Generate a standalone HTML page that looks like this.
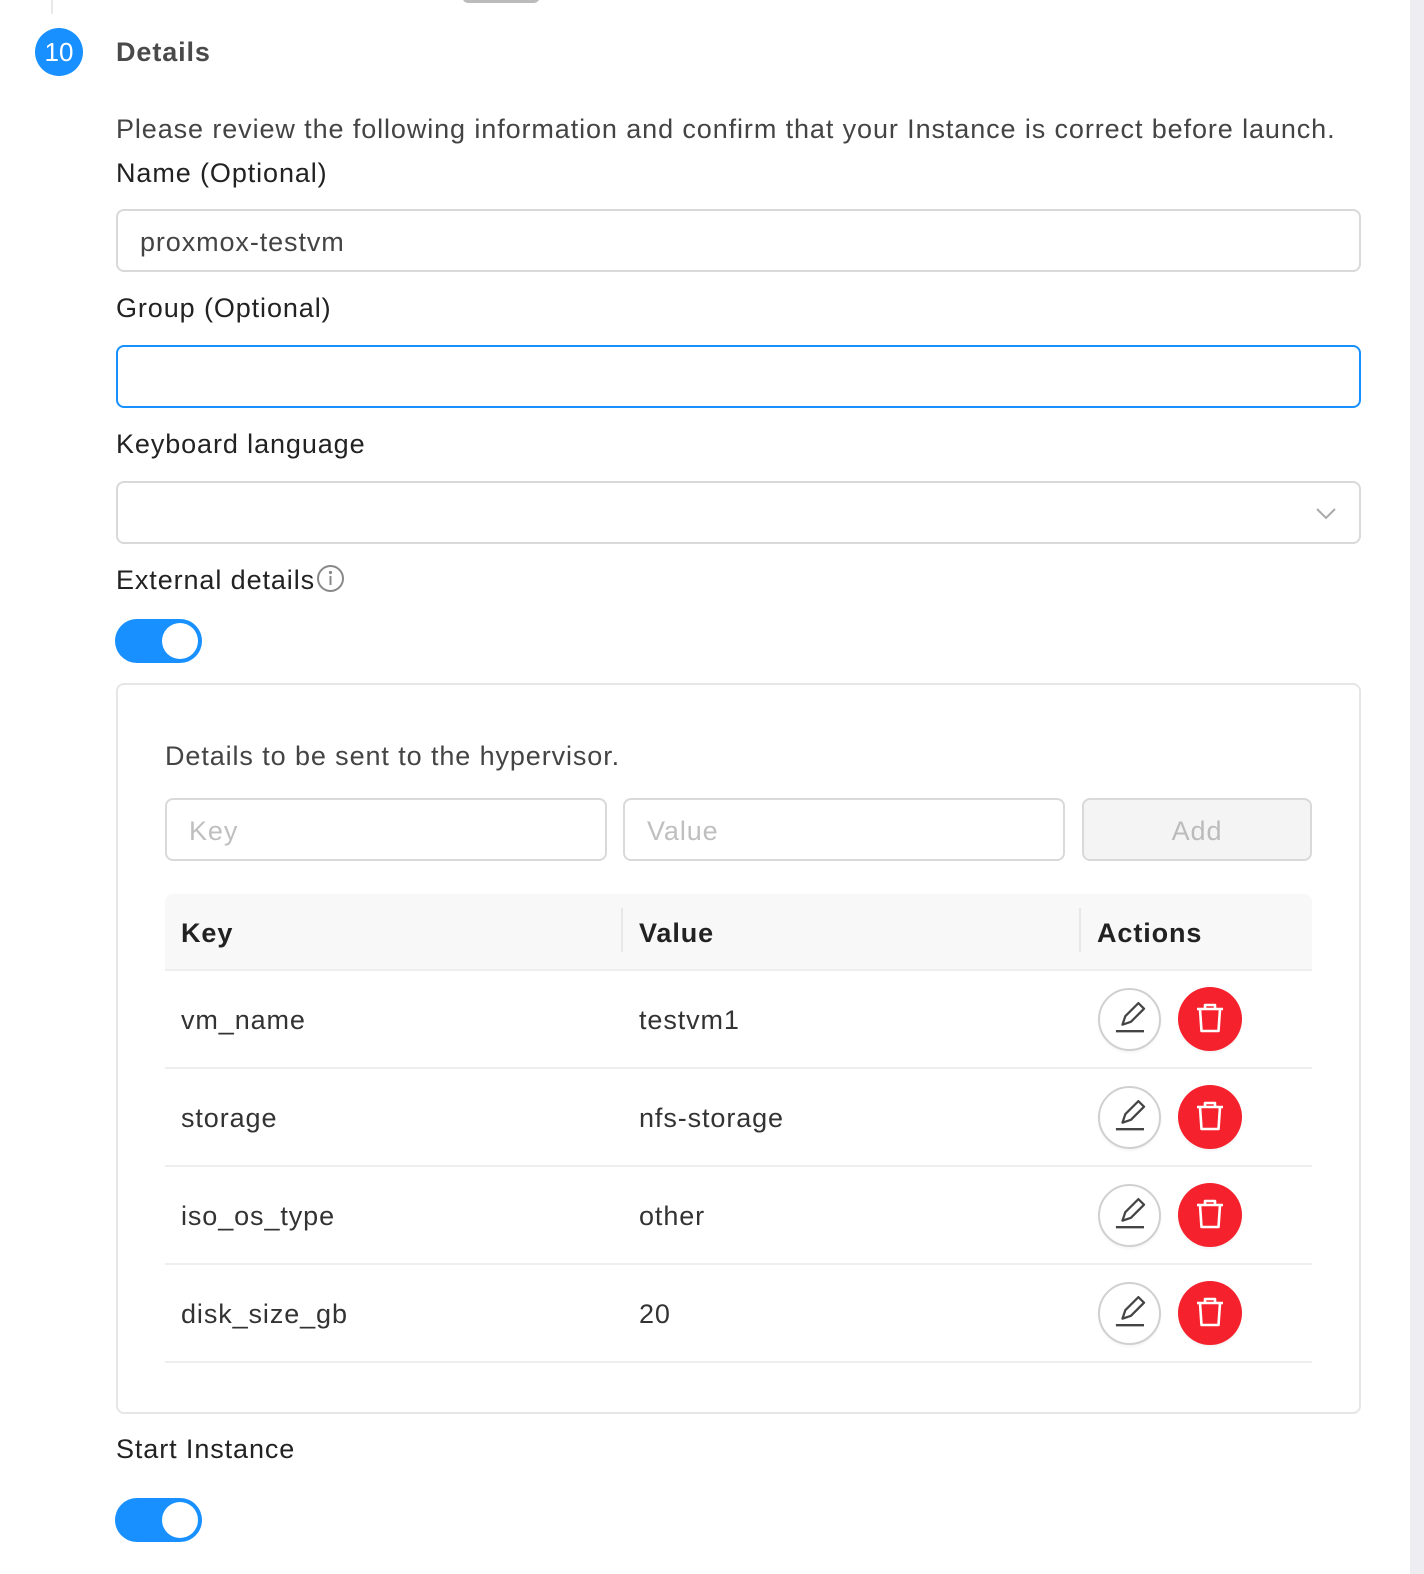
<!DOCTYPE html>
<html><head><style>
*{box-sizing:border-box;margin:0;padding:0}
body{width:1424px;height:1574px;background:#fff;font-family:"Liberation Sans",sans-serif;position:relative;overflow:hidden;color:#222;letter-spacing:0.9px}
.a{position:absolute}
.t{font-size:27px;color:#222;line-height:30px;white-space:nowrap}
.inp{position:absolute;border:2px solid #d9d9d9;border-radius:8px;background:#fff;height:63px}
.ph{font-size:27px;color:#bfbfbf;position:absolute;left:22px;top:16px}
.row{position:absolute;left:165px;width:1147px;height:98px;border-bottom:2px solid #eee}
.row span{position:absolute;top:34px;font-size:27px;color:#333}
.eb{position:absolute;width:63px;height:63px;border-radius:50%;border:2px solid #d0d0d0;background:#fff;box-shadow:0 2px 2px rgba(0,0,0,.04)}
.db{position:absolute;width:64px;height:64px;border-radius:50%;background:#f5222d;box-shadow:0 2px 2px rgba(0,0,0,.05)}
.tg{position:absolute;left:115px;width:87px;height:44px;border-radius:22px;background:#1890ff}
.tg i{position:absolute;right:4px;top:4px;width:36px;height:36px;border-radius:50%;background:#fff}
</style></head><body>
<div class="a" style="left:1410px;top:0;width:14px;height:1574px;background:#ededf2"></div>
<div class="a" style="left:51px;top:0;width:2px;height:14px;background:#e8e8e8"></div>
<div class="a" style="left:462px;top:-10px;width:78px;height:13px;border-radius:7px;background:#bbb"></div>
<div class="a" style="left:35px;top:28px;width:48px;height:48px;border-radius:50%;background:#1890ff;color:#fff;font-size:26px;text-align:center;line-height:48px;letter-spacing:0">10</div>
<div class="a" style="left:116px;top:37px;font-size:27px;font-weight:bold;color:#4a4a4a">Details</div>
<div class="a t" style="left:116px;top:114px;color:#444">Please review the following information and confirm that your Instance is correct before launch.</div>
<div class="a t" style="left:116px;top:158px">Name (Optional)</div>
<div class="inp" style="left:116px;top:209px;width:1245px"><span class="ph" style="color:#444">proxmox-testvm</span></div>
<div class="a t" style="left:116px;top:293px">Group (Optional)</div>
<div class="inp" style="left:116px;top:345px;width:1245px;border-color:#1890ff"></div>
<div class="a t" style="left:116px;top:429px">Keyboard language</div>
<div class="inp" style="left:116px;top:481px;width:1245px">
<svg class="a" style="right:22px;top:22px" width="22" height="16" viewBox="0 0 22 16"><path d="M2 4l9 9 9-9" fill="none" stroke="#aaa" stroke-width="2"/></svg></div>
<div class="a t" style="left:116px;top:565px">External details</div>
<svg class="a" style="left:316px;top:564px" width="29" height="29" viewBox="0 0 29 29"><circle cx="14.5" cy="14.5" r="12.5" fill="none" stroke="#888" stroke-width="2"/><circle cx="14.5" cy="8.5" r="1.6" fill="#888"/><path d="M14.5 12v9" stroke="#888" stroke-width="2"/></svg>
<div class="tg" style="top:619px"><i></i></div>
<div class="a" style="left:116px;top:683px;width:1245px;height:731px;border:2px solid #e6e6e6;border-radius:8px"></div>
<div class="a t" style="left:165px;top:741px;color:#444">Details to be sent to the hypervisor.</div>
<div class="inp" style="left:165px;top:798px;width:442px"><span class="ph">Key</span></div>
<div class="inp" style="left:623px;top:798px;width:442px"><span class="ph">Value</span></div>
<div class="inp" style="left:1082px;top:798px;width:230px;background:#f4f4f4;text-align:center"><span style="font-size:27px;color:#bbb;line-height:63px">Add</span></div>
<div class="a" style="left:165px;top:894px;width:1147px;height:77px;background:#f8f8f8;border-radius:8px 8px 0 0;border-bottom:2px solid #eee">
<span class="a" style="left:16px;top:24px;font-size:27px;font-weight:bold;color:#222">Key</span>
<div class="a" style="left:456px;top:14px;width:2px;height:44px;background:#e8e8e8"></div>
<span class="a" style="left:474px;top:24px;font-size:27px;font-weight:bold;color:#222">Value</span>
<div class="a" style="left:914px;top:14px;width:2px;height:44px;background:#e8e8e8"></div>
<span class="a" style="left:932px;top:24px;font-size:27px;font-weight:bold;color:#222">Actions</span>
</div>
<div class="row" style="top:971px"><span style="left:16px">vm_name</span><span style="left:474px">testvm1</span></div>
<div class="row" style="top:1069px"><span style="left:16px">storage</span><span style="left:474px">nfs-storage</span></div>
<div class="row" style="top:1167px"><span style="left:16px">iso_os_type</span><span style="left:474px">other</span></div>
<div class="row" style="top:1265px"><span style="left:16px">disk_size_gb</span><span style="left:474px">20</span></div>
<svg width="0" height="0" style="position:absolute"><defs>
<symbol id="pen" viewBox="0 0 63 63"><path d="M24 37l3-9 14-14 6 6-14 14z" fill="none" stroke="#444" stroke-width="2.4" stroke-linejoin="round"/><path d="M17 44h30" stroke="#444" stroke-width="2.6"/></symbol>
<symbol id="bin" viewBox="0 0 64 64"><path d="M19 22h26M27 22v-4h10v4M22 22l1.5 22h17l1.5-22" fill="none" stroke="#fff" stroke-width="2.6" stroke-linejoin="round"/></symbol></defs></svg>
<div class="eb" style="left:1098px;top:988px"><svg width="59" height="59"><use href="#pen"/></svg></div>
<div class="db" style="left:1178px;top:987px"><svg width="64" height="64"><use href="#bin"/></svg></div>
<div class="eb" style="left:1098px;top:1086px"><svg width="59" height="59"><use href="#pen"/></svg></div>
<div class="db" style="left:1178px;top:1085px"><svg width="64" height="64"><use href="#bin"/></svg></div>
<div class="eb" style="left:1098px;top:1184px"><svg width="59" height="59"><use href="#pen"/></svg></div>
<div class="db" style="left:1178px;top:1183px"><svg width="64" height="64"><use href="#bin"/></svg></div>
<div class="eb" style="left:1098px;top:1282px"><svg width="59" height="59"><use href="#pen"/></svg></div>
<div class="db" style="left:1178px;top:1281px"><svg width="64" height="64"><use href="#bin"/></svg></div>
<div class="a t" style="left:116px;top:1434px">Start Instance</div>
<div class="tg" style="top:1498px"><i></i></div>
</body></html>
